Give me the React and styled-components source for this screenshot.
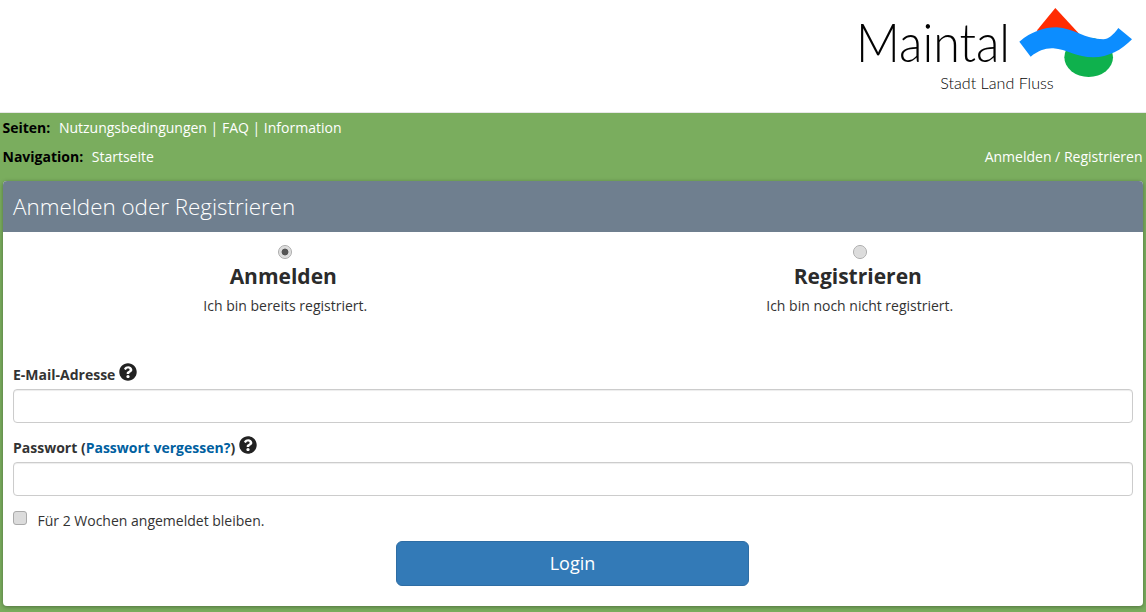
import React from "react";
import styled, { createGlobalStyle } from "styled-components";
import { FaQuestionCircle } from "react-icons/fa";

const Global = createGlobalStyle`
  html, body { margin: 0; padding: 0; height: 612px; overflow: hidden; background: #7aad5e; }
  * { box-sizing: border-box; }
  body { font-family: "Open Sans", "DejaVu Sans", sans-serif; font-size: 14px; line-height: 20px; color: #333; }
`;
const Page = styled.div`height: 612px; display: flex; flex-direction: column; background: #7aad5e;`;
const Header = styled.header`
  height: 113px; background: #fff; border-bottom: 1px solid #e7e7e7;
  display: flex; justify-content: flex-end;
`;
const Nav = styled.nav`padding: 5px 3.5px 0 2.5px; display: flex; flex-direction: column; gap: 9px; height: 68px;`;
const NavRow = styled.div`display: flex; justify-content: space-between; color: #fff;`;
const NavGroup = styled.div`display: flex; gap: 8.6px;`;
const NavLabel = styled.b`color: #000; font-weight: 700;`;
const NavLink = styled.a`color: #fff;`;
const Panel = styled.main`
  margin: 0 3px; height: 425px; background: #fff; border-radius: 4px;
  box-shadow: 0 1px 4px rgba(0,0,0,.35); overflow: hidden;
`;
const PanelHead = styled.h1`
  margin: 0; height: 51px; background: #6f7f8f; color: #fff;
  font-size: 22.4px; font-weight: 300; line-height: 52px; padding: 0 10px;
`;
const PanelBody = styled.form`padding: 13px 10px 0;`;
const Choices = styled.div`display: grid; grid-template-columns: 1fr 1fr; gap: 30px; height: 118px; padding-right: 1px; text-align: center;`;
const Choice = styled.label`display: flex; flex-direction: column; align-items: center;`;
const Radio = styled.input.attrs({ type: "radio", name: "mode" })`
  appearance: none; margin: 0; width: 14px; height: 14px; border-radius: 50%;
  border: 1px solid #aaa; background: #dcdcdc; box-shadow: inset 0 0 1px #fff; flex: none;
  &:checked { background: radial-gradient(circle, #555 0 3px, #dcdcdc 3.8px); }
`;
const ChoiceTitle = styled.h3`margin: 4px 0 0; padding-right: 4px; font-size: 21px; line-height: 26px; font-weight: 700; color: #2b2b2b;`;
const ChoiceText = styled.p`margin: 7px 0 0; line-height: 20px;`;
const Field = styled.div`display: flex; flex-direction: column;`;
const LabelRow = styled.label`display: flex; align-items: flex-start; gap: 3.6px; font-weight: 700; height: 26px; padding-top: 2px;`;
const Link = styled.a`color: #00609f;`;
const Help = styled(FaQuestionCircle)`color: #222; width: 18px; height: 18px; margin-top: -2px;`;
const Input = styled.input`
  height: 34px; width: 100%; border: 1px solid #ccc; border-radius: 4px; background: #fff;
  box-shadow: inset 0 1px 1px rgba(0,0,0,.075); margin-bottom: 13px;
`;
const Remember = styled.label`display: flex; align-items: flex-start; gap: 10.5px; margin-top: 2px; height: 25px;`;
const Check = styled.input.attrs({ type: "checkbox" })`
  appearance: none; margin: 0; width: 14px; height: 14px; border: 1px solid #aaa;
  border-radius: 3px; background: #dcdcdc; flex: none;
`;
const Actions = styled.div`display: flex; justify-content: center; margin-top: 5px; padding-right: 1px;`;
const Button = styled.button`
  width: 353px; height: 45px; padding: 0 0 2px; background: #337ab7; border: 1px solid #2e6da4; border-radius: 6px;
  color: #fff; font: 400 18px "Open Sans", sans-serif;
`;
const LogoSvg = styled.svg`width: 306px; height: 112px; display: block; flex: none; opacity: .99;`;

const Logo = () => (
  <LogoSvg viewBox="0 0 918 336" role="img" aria-label="Maintal Stadt Land Fluss">
    <polygon points="646,24 590,92 718,102" fill="#ff2a00" />
    <ellipse cx="746" cy="172" rx="73" ry="59" fill="#0db14b" />
    <path d="M538 125 C575 95 610 82 650 82 C700 84 735 118 790 118 C805 117 820 105 835 84 L876 118 C845 150 805 172 760 172 C710 172 680 148 640 145 C615 144 595 152 572 170 Z" fill="#0a8cff" />
    <text x="48" y="185" fontFamily="Lato, sans-serif" fontWeight="300" fontSize="160" textLength="462" lengthAdjust="spacingAndGlyphs" fill="#000">Maintal</text>
    <text x="301" y="266" fontFamily="Lato, sans-serif" fontWeight="300" fontSize="48" textLength="340" lengthAdjust="spacingAndGlyphs" fill="#000">Stadt Land Fluss</text>
  </LogoSvg>
);

export default function App() {
  return (
    <Page>
      <Global />
      <Header><Logo /></Header>
      <Nav>
        <NavRow>
          <NavGroup>
            <NavLabel>Seiten:</NavLabel>
            <span><NavLink>Nutzungsbedingungen</NavLink> | <NavLink>FAQ</NavLink> | <NavLink>Information</NavLink></span>
          </NavGroup>
        </NavRow>
        <NavRow>
          <NavGroup>
            <NavLabel>Navigation:</NavLabel>
            <NavLink>Startseite</NavLink>
          </NavGroup>
          <span><NavLink>Anmelden</NavLink> / <NavLink>Registrieren</NavLink></span>
        </NavRow>
      </Nav>
      <Panel>
        <PanelHead>Anmelden oder Registrieren</PanelHead>
        <PanelBody onSubmit={(e) => e.preventDefault()}>
          <Choices>
            <Choice>
              <Radio defaultChecked />
              <ChoiceTitle>Anmelden</ChoiceTitle>
              <ChoiceText>Ich bin bereits registriert.</ChoiceText>
            </Choice>
            <Choice>
              <Radio />
              <ChoiceTitle>Registrieren</ChoiceTitle>
              <ChoiceText>Ich bin noch nicht registriert.</ChoiceText>
            </Choice>
          </Choices>
          <Field>
            <LabelRow>E-Mail-Adresse <Help /></LabelRow>
            <Input type="text" />
          </Field>
          <Field>
            <LabelRow><span>Passwort (<Link>Passwort vergessen?</Link>)</span> <Help /></LabelRow>
            <Input type="password" />
          </Field>
          <Remember><Check /> Für 2 Wochen angemeldet bleiben.</Remember>
          <Actions><Button type="submit">Login</Button></Actions>
        </PanelBody>
      </Panel>
    </Page>
  );
}
